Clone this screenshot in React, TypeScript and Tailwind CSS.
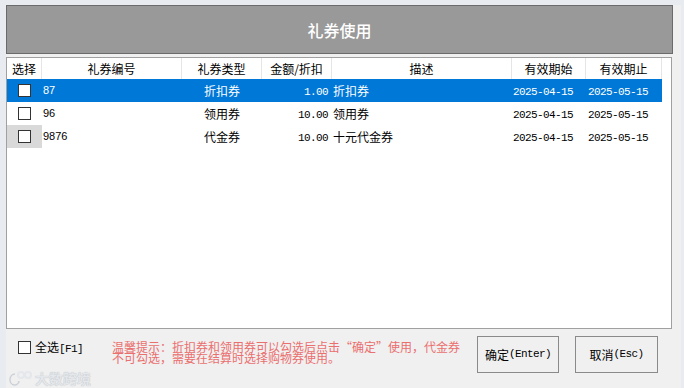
import React from "react";

type Coupon = {
  id: string;
  type: string;
  amount: string;
  desc: string;
  start: string;
  end: string;
};

const coupons: Coupon[] = [
  { id: "87", type: "折扣券", amount: "1.00", desc: "折扣券", start: "2025-04-15", end: "2025-05-15" },
  { id: "96", type: "领用券", amount: "10.00", desc: "领用券", start: "2025-04-15", end: "2025-05-15" },
  { id: "9876", type: "代金券", amount: "10.00", desc: "十元代金券", start: "2025-04-15", end: "2025-05-15" },
];

const cols = "grid grid-cols-[35px_140px_80px_70px_180px_74px_76px_9px]";

// half-width latin like SimSun: 6px per char
function M({ children }: { children: React.ReactNode }) {
  return <span className="font-['Liberation_Mono',monospace] text-[11px] tracking-[-0.6px]">{children}</span>;
}

function Box() {
  return <span className="block w-[13px] h-[13px] bg-white border border-[#333333]" />;
}

function App() {
  return (
    <div className="relative w-[684px] h-[388px] bg-[#e8ebef] pt-[5px] pl-[6px] overflow-hidden font-['Noto_Sans_CJK_SC','Noto_Sans',sans-serif] text-[12px] text-black">
      <div className="w-[675px] h-[383px] bg-[#f0f0f0] flex flex-col">
        {/* title bar */}
        <div className="w-[667px] h-[49px] bg-[#999999] border border-[#6b6b6b] flex items-center justify-center text-white text-[16px] font-medium">
          礼券使用
        </div>

        {/* table */}
        <div className="mt-[3px] w-[666px] h-[272px] bg-white border border-[#a0a0a0]">
          <div className={`${cols} h-[21px] leading-[21px] text-center`}>
            <div className="border-r border-[#e5e5e5]">选择</div>
            <div className="border-r border-[#e5e5e5]">礼券编号</div>
            <div className="border-r border-[#e5e5e5]">礼券类型</div>
            <div className="border-r border-[#e5e5e5]">金额/折扣</div>
            <div className="border-r border-[#e5e5e5]">描述</div>
            <div className="border-r border-[#e5e5e5]">有效期始</div>
            <div className="border-r border-[#e5e5e5]">有效期止</div>
            <div />
          </div>
          {coupons.map((c, i) => {
            const sel = i === 0;
            return (
              <div key={c.id} className={`${cols} h-[23px] items-center`}>
                <div className={`col-span-7 grid grid-cols-[35px_140px_80px_70px_180px_74px_76px] h-full items-center ${sel ? "bg-[#0078d7] text-white" : ""}`}>
                  <div className={`h-full flex items-center pl-[11px] ${i === 2 ? "bg-[#d9d9d9]" : ""}`}>
                    <Box />
                  </div>
                  <div className="pl-[1px] font-['Liberation_Sans',sans-serif] text-[11px]">{c.id}</div>
                  <div className="text-center">{c.type}</div>
                  <div className="text-right pr-[4px]"><M>{c.amount}</M></div>
                  <div className="pl-[1px]">{c.desc}</div>
                  <div className="text-right pr-[13px]"><M>{c.start}</M></div>
                  <div className="text-right pr-[14px]"><M>{c.end}</M></div>
                </div>
                <div />
              </div>
            );
          })}
        </div>

        {/* footer */}
        <div className="flex-1 flex items-start pt-[7px]">
          <div className="ml-[12px] mt-[5px] flex items-center gap-[4px] h-[13px]">
            <Box />
            <span className="leading-[13px]">全选<M>[F1]</M></span>
          </div>
          <div className="ml-[29px] mt-[5px] w-[350px] text-[12px] leading-[11px] text-[#ea6f6f]">
            温馨提示：折扣券和领用券可以勾选后点击“确定”使用，代金券不可勾选，需要在结算时选择购物券使用。
          </div>
          <button className="ml-[15px] w-[82px] h-[37px] border border-[#8a8a8a] bg-[#f0f0f0] flex items-center justify-center">
            确定<M>(Enter)</M>
          </button>
          <button className="ml-[16px] w-[83px] h-[37px] border border-[#8a8a8a] bg-[#f0f0f0] flex items-center justify-center">
            取消<M>(Esc)</M>
          </button>
        </div>
      </div>

      {/* screenshot watermark */}
      <div className="absolute left-[6px] top-[368px] flex items-center gap-[3px] text-[#e4e7eb] text-[14px] font-bold [text-shadow:0_0_1px_#a9aeb5]">
        <svg width="26" height="18" viewBox="0 0 26 18" fill="none" stroke="#e4e7eb" strokeWidth="2.2">
          <path d="M9 4 C3 4 2 14 8 15 C11 15.5 13 13 13 11" />
          <circle cx="15" cy="5" r="3" />
          <circle cx="22" cy="5" r="3" />
          <path d="M9 4 C3 4 2 14 8 15 C11 15.5 13 13 13 11" stroke="#a9aeb5" strokeWidth="0.5" />
        </svg>
        <span>大数跨境</span>
      </div>
    </div>
  );
}

export default App;
